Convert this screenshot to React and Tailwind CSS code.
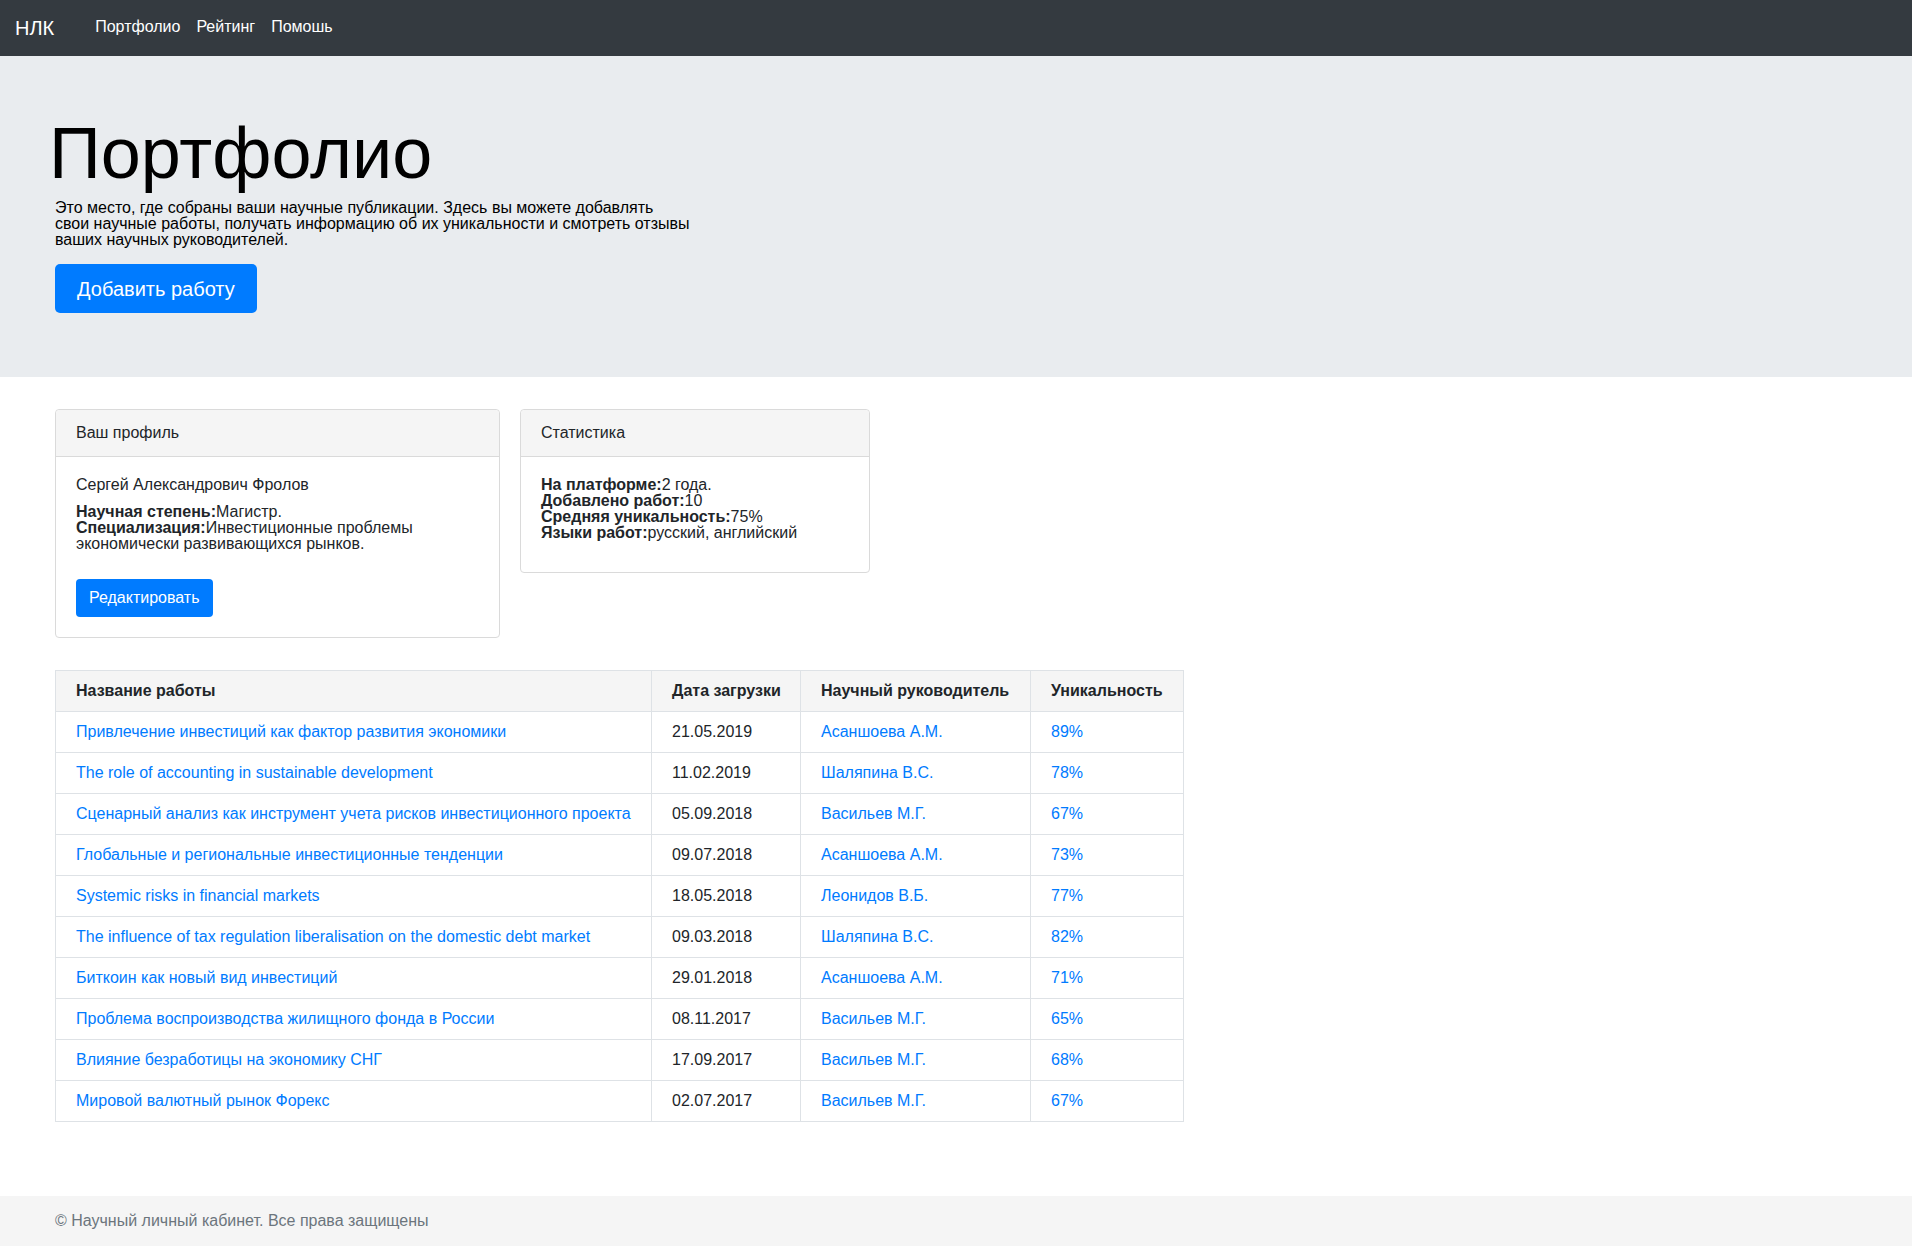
import React from "react";

const works = [
  { title: "Привлечение инвестиций как фактор развития экономики", date: "21.05.2019", tutor: "Асаншоева А.М.", score: "89%" },
  { title: "The role of accounting in sustainable development", date: "11.02.2019", tutor: "Шаляпина В.С.", score: "78%" },
  { title: "Сценарный анализ как инструмент учета рисков инвестиционного проекта", date: "05.09.2018", tutor: "Васильев М.Г.", score: "67%" },
  { title: "Глобальные и региональные инвестиционные тенденции", date: "09.07.2018", tutor: "Асаншоева А.М.", score: "73%" },
  { title: "Systemic risks in financial markets", date: "18.05.2018", tutor: "Леонидов В.Б.", score: "77%" },
  { title: "The influence of tax regulation liberalisation on the domestic debt market", date: "09.03.2018", tutor: "Шаляпина В.С.", score: "82%" },
  { title: "Биткоин как новый вид инвестиций", date: "29.01.2018", tutor: "Асаншоева А.М.", score: "71%" },
  { title: "Проблема воспроизводства жилищного фонда в России", date: "08.11.2017", tutor: "Васильев М.Г.", score: "65%" },
  { title: "Влияние безработицы на экономику СНГ", date: "17.09.2017", tutor: "Васильев М.Г.", score: "68%" },
  { title: "Мировой валютный рынок Форекс", date: "02.07.2017", tutor: "Васильев М.Г.", score: "67%" },
];

const Card = ({ title, width, children }) => (
  <div className={`${width} border border-[#dadada] rounded bg-white`}>
    <div className="h-[47px] flex items-center px-5 bg-[#f5f5f5] border-b border-[#dadada] rounded-t">
      {title}
    </div>
    <div className="px-5 pt-5 pb-5">{children}</div>
  </div>
);

export default function App() {
  return (
    <div
      className="min-h-screen bg-white text-[#212529] text-[16px]"
      style={{ fontFamily: '"Liberation Sans", Arial, sans-serif' }}
    >
      {/* navbar */}
      <nav className="h-[56px] bg-[#343a40] flex items-center pl-[15px]">
        <a href="#" className="text-white text-[20px] mr-[33px]">
          НЛК
        </a>
        <div className="flex -mt-[3px]">
          <a href="#" className="text-white px-2">Портфолио</a>
          <a href="#" className="text-white px-2">Рейтинг</a>
          <a href="#" className="text-white px-2">Помошь</a>
        </div>
      </nav>

      {/* jumbotron */}
      <section className="bg-[#e9ecef] pt-[54px] pb-[64px] px-[55px]">
        <h1 className="text-[72px] leading-[1.2] text-black -ml-[6px] mb-1">
          Портфолио
        </h1>
        <p className="max-w-[635px] leading-4 text-black">
          Это место, где собраны ваши научные публикации. Здесь вы можете добавлять
          свои научные работы, получать информацию об их уникальности и смотреть отзывы
          ваших научных руководителей.
        </p>
        <button className="mt-[16px] h-[49px] px-[22px] bg-[#007bff] text-white text-[20px] rounded-[5px]">
          Добавить работу
        </button>
      </section>

      <main className="px-[55px] pt-[32px]">
        <div className="flex items-start gap-[20px]">
          <Card title="Ваш профиль" width="w-[445px]">
            <p className="leading-4 mb-[11px]">Сергей Александрович Фролов</p>
            <p className="leading-4">
              <b>Научная степень:</b>Магистр.
              <br />
              <b>Специализация:</b>Инвестиционные проблемы экономически развивающихся
              рынков.
            </p>
            <button className="mt-[27px] h-[38px] px-[13px] bg-[#007bff] text-white rounded">
              Редактировать
            </button>
          </Card>
          <Card title="Статистика" width="w-[350px]">
            <p className="leading-4 mb-[11px]">
              <b>На платформе:</b>2 года.
              <br />
              <b>Добавлено работ:</b>10
              <br />
              <b>Средняя уникальность:</b>75%
              <br />
              <b>Языки работ:</b>русский, английский
            </p>
          </Card>
        </div>

        <table className="mt-[32px] w-[1128px] table-fixed border-collapse">
          <thead>
            <tr className="bg-[#f5f5f5]">
              <th className="w-[596px] h-[41px] px-5 text-left font-bold whitespace-nowrap border border-[#dee2e6]">Название работы</th>
              <th className="w-[149px] h-[41px] pl-5 pr-2 text-left font-bold whitespace-nowrap border border-[#dee2e6]">Дата загрузки</th>
              <th className="w-[230px] h-[41px] px-5 text-left font-bold whitespace-nowrap border border-[#dee2e6]">Научный руководитель</th>
              <th className="w-[153px] h-[41px] px-5 text-left font-bold whitespace-nowrap border border-[#dee2e6]">Уникальность</th>
            </tr>
          </thead>
          <tbody>
            {works.map((w, i) => (
              <tr key={i}>
                <td className="h-[41px] px-5 border border-[#dee2e6]">
                  <a href="#" className="text-[#007bff]">{w.title}</a>
                </td>
                <td className="h-[41px] px-5 border border-[#dee2e6]">{w.date}</td>
                <td className="h-[41px] px-5 border border-[#dee2e6]">
                  <a href="#" className="text-[#007bff]">{w.tutor}</a>
                </td>
                <td className="h-[41px] px-5 border border-[#dee2e6]">
                  <a href="#" className="text-[#007bff]">{w.score}</a>
                </td>
              </tr>
            ))}
          </tbody>
        </table>
      </main>

      <footer className="mt-[74px] h-[51px] bg-[#f5f5f5] px-[55px] pt-[17px]">
        <p className="leading-4 text-[#6c757d]">© Научный личный кабинет. Все права защищены</p>
      </footer>
    </div>
  );
}
